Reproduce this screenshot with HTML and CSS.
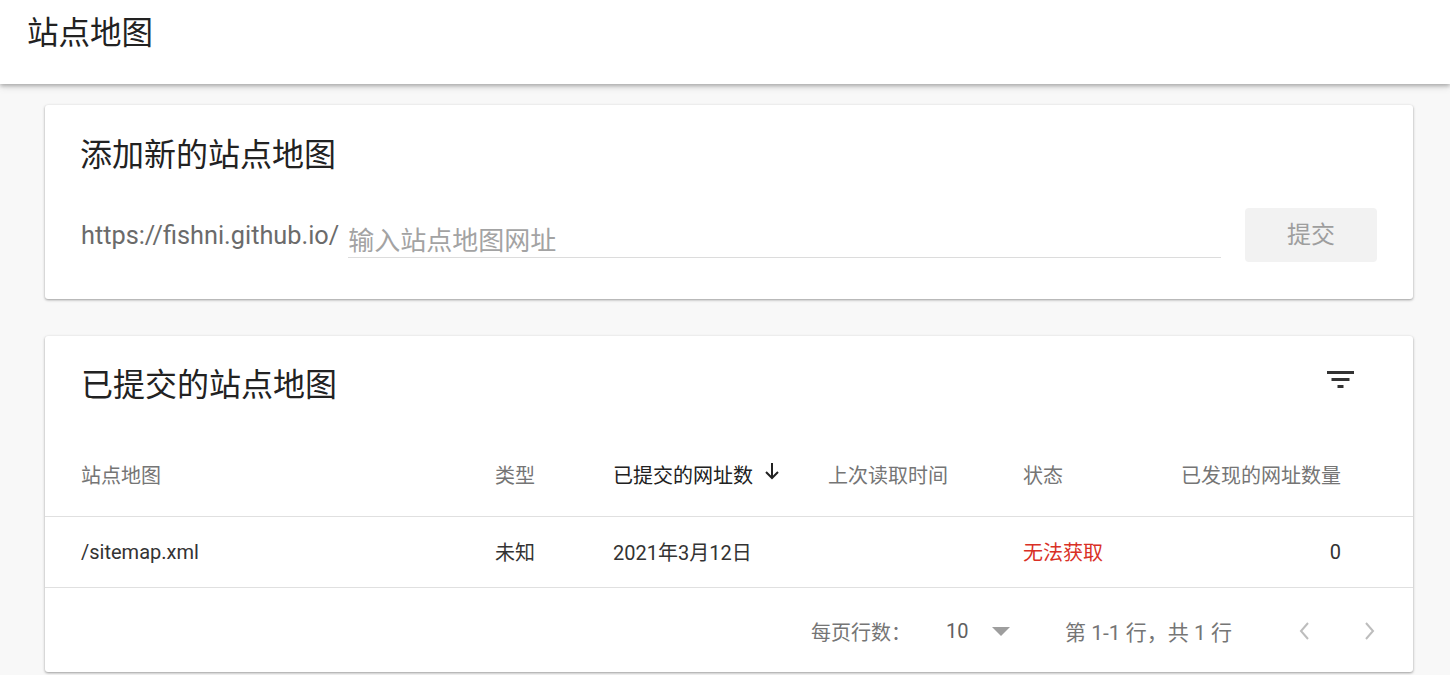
FILE: index.html
```html
<!DOCTYPE html>
<html lang="zh-CN">
<head>
<meta charset="utf-8">
<title>站点地图</title>
<link rel="stylesheet" href="styles.css">
</head>
<body>
<header class="topbar">
  <h1 class="page-title">站点地图</h1>
</header>
<main class="content">
  <section class="card add-card">
    <h2 class="card-title">添加新的站点地图</h2>
    <div class="add-row">
      <span class="prefix">https://fishni.github.io/</span>
      <div class="input-wrap"><span class="placeholder">输入站点地图网址</span></div>
      <button class="submit-btn">提交</button>
    </div>
  </section>

  <section class="card list-card">
    <div class="list-head">
      <h2 class="card-title">已提交的站点地图</h2>
      <svg class="filter-icon" width="28" height="20" viewBox="0 0 28 20">
        <rect x="0" y="1" width="27" height="3" fill="#333"/>
        <rect x="4.5" y="8" width="18" height="3" fill="#333"/>
        <rect x="10.5" y="15" width="6" height="3" fill="#333"/>
      </svg>
    </div>
    <div class="row head-row">
      <div class="c c-map">站点地图</div>
      <div class="c c-type">类型</div>
      <div class="c c-sub sorted">已提交的网址数
        <svg class="sort-arrow" width="16" height="18" viewBox="0 0 16 18"><path d="M8 1v15M2 10l6 6 6-6" stroke="#222" stroke-width="2" fill="none"/></svg>
      </div>
      <div class="c c-read">上次读取时间</div>
      <div class="c c-status">状态</div>
      <div class="c c-found">已发现的网址数量</div>
    </div>
    <div class="row data-row">
      <div class="c c-map">/sitemap.xml</div>
      <div class="c c-type">未知</div>
      <div class="c c-sub">2021年3月12日</div>
      <div class="c c-read"></div>
      <div class="c c-status error">无法获取</div>
      <div class="c c-found">0</div>
    </div>
    <div class="pager">
      <span class="pager-label">每页行数：</span>
      <span class="pager-size">10</span>
      <span class="pager-caret"></span>
      <span class="pager-range">第 1-1 行，共 1 行</span>
      <svg class="chev" width="14" height="20" viewBox="0 0 14 20"><path d="M11 2L4 10l7 8" stroke="#bdbdbd" stroke-width="2" fill="none"/></svg>
      <svg class="chev" width="14" height="20" viewBox="0 0 14 20"><path d="M3 2l7 8-7 8" stroke="#bdbdbd" stroke-width="2" fill="none"/></svg>
    </div>
  </section>
</main>
</body>
</html>
```
FILE: styles.css
```css
* { box-sizing: border-box; }
html, body { margin: 0; padding: 0; }
body {
  background: #f8f8f8;
  font-family: Roboto, "Noto Sans CJK SC", sans-serif;
  color: #212121;
  width: 1450px;
  height: 675px;
  overflow: hidden;
}
.topbar {
  height: 84px;
  background: #fff;
  box-shadow: 0 2px 4px rgba(0,0,0,0.25), 0 3px 8px rgba(0,0,0,0.1);
  display: flex;
  align-items: center;
  padding-left: 27px;
  position: relative;
  z-index: 2;
}
.page-title {
  margin: 0 0 16px;
  font-weight: 400;
  font-size: 31.5px;
  line-height: 40px;
  color: #222;
}
.content {
  padding: 21px 37px 0 45px;
  display: flex;
  flex-direction: column;
  gap: 37px;
}
.card {
  background: #fff;
  border-radius: 3px;
  box-shadow: 0 1px 3px rgba(0,0,0,0.3), 0 1px 2px rgba(0,0,0,0.1);
}
.card-title {
  margin: 0;
  font-weight: 400;
  font-size: 32px;
  line-height: 40px;
  color: #222;
}
.add-card {
  height: 194px;
  padding: 30px 36px 0 35px;
}
.add-row {
  margin-top: 33px;
  display: flex;
  align-items: center;
  height: 54px;
}
.prefix {
  font-size: 25.3px;
  color: #6b6b6b;
  margin-right: 9px;
  margin-left: 1px;
  padding-top: 1px;
}
.input-wrap {
  flex: 1;
  height: 46px;
  border-bottom: 1px solid #dcdcdc;
  display: flex;
  align-items: flex-end;
  margin-top: -1px;
}
.placeholder {
  font-size: 26px;
  color: #a3a3a3;
  line-height: 32px;
}
.submit-btn {
  margin-left: 24px;
  width: 132px;
  height: 54px;
  border: none;
  border-radius: 4px;
  background: #f2f2f2;
  color: #9e9e9e;
  font-family: inherit;
  font-size: 24px;
  padding: 0 0 5px;
}
.list-card {
  height: 336px;
  display: flex;
  flex-direction: column;
}
.list-head {
  height: 96px;
  padding: 29px 58px 0 36px;
  display: flex;
  justify-content: space-between;
  align-items: flex-start;
}
.filter-icon { margin-top: 5px; }
.row {
  display: flex;
  align-items: center;
  padding: 0 72px 0 36px;
  border-bottom: 1px solid #e0e0e0;
  font-size: 20px;
}
.head-row { height: 85px; color: #757575; }
.data-row { height: 71px; color: #333; padding-bottom: 1px; }
.c { white-space: nowrap; flex-shrink: 0; }
.c-map { width: 414px; }
.c-type { width: 118px; }
.c-sub { width: 215px; display: flex; align-items: center; }
.c-read { width: 195px; }
.c-status { width: 163px; }
.c-found { flex: 1 1 0; min-width: 0; display: flex; justify-content: flex-end; }
.sorted { color: #212121; }
.sort-arrow { margin-left: 11px; margin-top: -6px; }
.error { color: #d93025; }
.pager {
  flex: 1;
  display: flex;
  align-items: center;
  font-size: 20px;
  color: #757575;
  padding-left: 766px;
  padding-top: 2px;
}
.pager-label { width: 135px; }
.pager-size { color: #616161; width: 46px; }
.pager-caret {
  width: 0; height: 0;
  border-left: 9px solid transparent;
  border-right: 9px solid transparent;
  border-top: 9px solid #9e9e9e;
  margin-right: 55px;
}
.pager-range { width: 232px; font-size: 21px; }
.chev + .chev { margin-left: 52px; }
```
